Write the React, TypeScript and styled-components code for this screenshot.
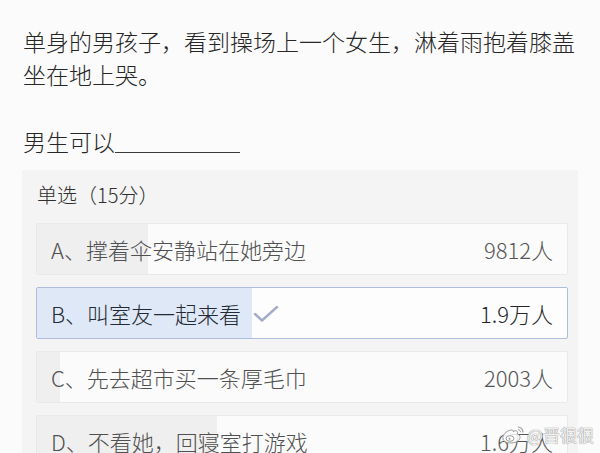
import React from "react";
import styled, { createGlobalStyle } from "styled-components";

const GlobalStyle = createGlobalStyle`
  html, body {
    margin: 0;
    padding: 0;
    background: #fbfbfb;
    overflow: hidden;
  }
  body {
    font-family: "Noto Sans CJK SC", "Noto Sans", sans-serif;
    font-weight: 300;
  }
`;

const Page = styled.div`
  position: relative;
  width: 600px;
  height: 453px;
  overflow: hidden;
  box-sizing: border-box;
  padding: 25px 22px 0 23px;
`;

const Question = styled.p`
  margin: 0;
  font-size: 23px;
  line-height: 33px;
  color: #262626;
`;

const Prompt = styled(Question)`
  margin-top: 34px;
`;

const Blank = styled.span`
  display: inline-block;
  width: 125px;
  border-bottom: 1px solid #3a3a3a;
  vertical-align: -2px;
`;

const Card = styled.section`
  margin: 12px 0 0 -1px;
  background: #f4f4f4;
  padding: 11px 10px 0 14px;
  display: flex;
  flex-direction: column;
  gap: 12px;
`;

const CardTitle = styled.div`
  font-size: 20px;
  line-height: 28px;
  color: #303030;
  padding-left: 1px;
  margin-bottom: 2px;
`;

const Option = styled.div<{ $selected?: boolean }>`
  position: relative;
  height: 52px;
  box-sizing: border-box;
  border: 1px solid ${(p) => (p.$selected ? "#aebddb" : "#e9e9e9")};
  border-radius: 2px;
  background: ${(p) => (p.$selected ? "#fdfdfe" : "#fbfbfb")};
  display: flex;
  align-items: center;
  padding: 0 14px;
  overflow: hidden;
`;

const Fill = styled.div<{ $selected?: boolean }>`
  position: absolute;
  left: 0;
  top: 0;
  bottom: 0;
  background: ${(p) => (p.$selected ? "#dfe8f6" : "#efefef")};
`;

const Label = styled.span<{ $selected?: boolean }>`
  position: relative;
  font-size: 22px;
  color: ${(p) => (p.$selected ? "#232833" : "#505050")};
  display: flex;
  align-items: center;
`;

const Count = styled(Label)`
  margin-left: auto;
  color: ${(p) => (p.$selected ? "#262626" : "#555555")};
`;

const Check = styled.svg`
  margin-left: 12px;
  margin-top: 2px;
`;

const Watermark = styled.div`
  position: absolute;
  right: 6px;
  bottom: 6px;
  display: flex;
  align-items: center;
  gap: 2px;
  font-size: 17px;
  font-weight: 400;
  color: rgba(255, 255, 255, 0.9);
  text-shadow: 0 0 1px #888, 0 0 1px #888;
`;

const options = [
  { label: "A、撑着伞安静站在她旁边", count: "9812人", pct: 21 },
  { label: "B、叫室友一起来看", count: "1.9万人", pct: 40.6, selected: true },
  { label: "C、先去超市买一条厚毛巾", count: "2003人", pct: 4.3 },
  { label: "D、不看她，回寝室打游戏", count: "1.6万人", pct: 34 },
];

function WeiboLogo() {
  return (
    <svg width="24" height="20" viewBox="0 0 24 20">
      <path
        d="M10 5 C5 6 1 10 2 14 C3 18 10 19 15 17 C19 15 20 12 18 10 C17 9 16 9.5 16.5 8 C17 6 15 5 12 6.5 C12 5 11.5 4.8 10 5 Z"
        fill="rgba(255,255,255,0.85)"
        stroke="#999"
        strokeWidth="1"
      />
      <ellipse cx="9" cy="13.5" rx="4" ry="2.8" fill="none" stroke="#999" strokeWidth="1" />
      <circle cx="8.5" cy="13.8" r="1" fill="#999" />
      <path d="M17 2 C20 2.5 22 4.5 22 7.5" fill="none" stroke="#999" strokeWidth="1.2" />
      <path d="M17 4.5 C18.5 4.8 19.5 5.8 19.6 7.2" fill="none" stroke="#999" strokeWidth="1" />
    </svg>
  );
}

export default function App() {
  return (
    <>
      <GlobalStyle />
      <Page>
        <Question>单身的男孩子，看到操场上一个女生，淋着雨抱着膝盖坐在地上哭。</Question>
        <Prompt>
          男生可以<Blank />
        </Prompt>
        <Card>
          <CardTitle>单选（15分）</CardTitle>
          {options.map((o) => (
            <Option key={o.label} $selected={o.selected}>
              <Fill $selected={o.selected} style={{ width: `${o.pct}%` }} />
              <Label $selected={o.selected}>
                {o.label}
                {o.selected && (
                  <Check width="26" height="18" viewBox="0 0 26 18">
                    <polyline
                      points="2,9 9,15.5 24,2"
                      fill="none"
                      stroke="#a3adc6"
                      strokeWidth="2.4"
                      strokeLinecap="round"
                      strokeLinejoin="round"
                    />
                  </Check>
                )}
              </Label>
              <Count $selected={o.selected}>{o.count}</Count>
            </Option>
          ))}
        </Card>
        <Watermark>
          <WeiboLogo />
          <span>@晋很很</span>
        </Watermark>
      </Page>
    </>
  );
}
